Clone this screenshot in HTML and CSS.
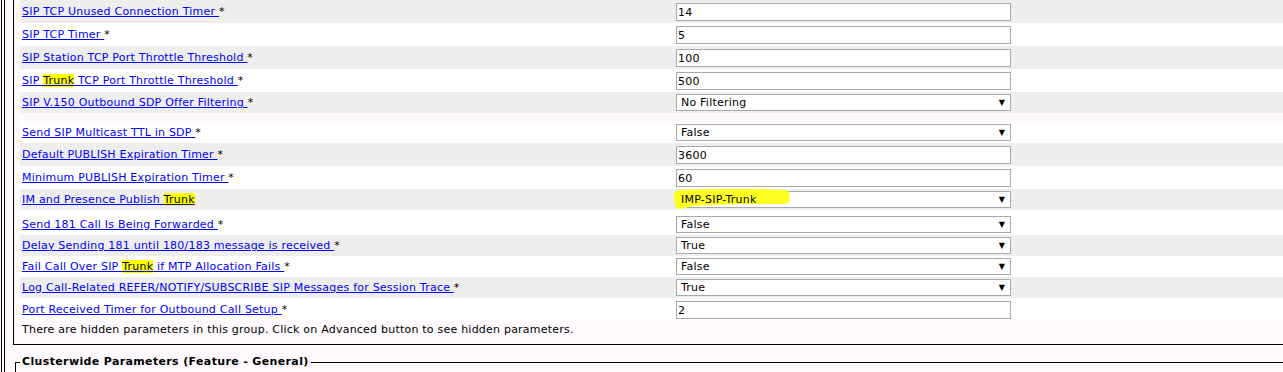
FILE: index.html
```html
<!DOCTYPE html>
<html lang="en">
<head>
  <meta charset="UTF-8" />
  <title>Service Parameter Configuration</title>
  <link rel="stylesheet" href="styles.css">
</head>
<body>

  <div class="frame">
    <div class="frame-inner">

      <div class="group">
        <table class="params">
          <tr class="shade">
            <td class="label"><a href="#">SIP TCP Unused Connection Timer </a> *</td>
            <td class="value"><input class="field" type="text" value="14"></td>
          </tr>
          <tr>
            <td class="label"><a href="#">SIP TCP Timer </a> *</td>
            <td class="value"><input class="field" type="text" value="5"></td>
          </tr>
          <tr class="shade">
            <td class="label"><a href="#">SIP Station TCP Port Throttle Threshold </a> *</td>
            <td class="value"><input class="field" type="text" value="100"></td>
          </tr>
          <tr>
            <td class="label"><a href="#">SIP <span class="hl">Trunk</span> TCP Port Throttle Threshold </a> *</td>
            <td class="value"><input class="field" type="text" value="500"></td>
          </tr>
          <tr class="shade pick">
            <td class="label"><a href="#">SIP V.150 Outbound SDP Offer Filtering </a> *</td>
            <td class="value"><div class="select"><span>No Filtering</span><span class="arrow">&#9660;</span></div></td>
          </tr>
          <tr class="spacer"><td colspan="2"></td></tr>
          <tr class="plain pick">
            <td class="label"><a href="#">Send SIP Multicast TTL in SDP </a> *</td>
            <td class="value"><div class="select"><span>False</span><span class="arrow">&#9660;</span></div></td>
          </tr>
          <tr class="shade">
            <td class="label"><a href="#">Default PUBLISH Expiration Timer </a> *</td>
            <td class="value"><input class="field" type="text" value="3600"></td>
          </tr>
          <tr>
            <td class="label"><a href="#">Minimum PUBLISH Expiration Timer </a> *</td>
            <td class="value"><input class="field" type="text" value="60"></td>
          </tr>
          <tr class="shade pick">
            <td class="label"><a href="#">IM and Presence Publish <span class="hl">Trunk</span></a></td>
            <td class="value">
              <div class="select marked">
                <svg class="marker" width="120" height="22" viewBox="0 0 120 22">
                  <path d="M1 4 L8 2 L40 1 L80 1 L113 2 L116 4 L117 13 L112 16 L70 16 L40 17 L20 18 L8 21 L3 20 L1 12 Z" />
                </svg>
                <span>IMP-SIP-Trunk</span><span class="arrow">&#9660;</span>
              </div>
            </td>
          </tr>
          <tr class="pick tall">
            <td class="label"><a href="#">Send 181 Call Is Being Forwarded </a> *</td>
            <td class="value"><div class="select"><span>False</span><span class="arrow">&#9660;</span></div></td>
          </tr>
          <tr class="shade pick">
            <td class="label"><a href="#">Delay Sending 181 until 180/183 message is received </a> *</td>
            <td class="value"><div class="select"><span>True</span><span class="arrow">&#9660;</span></div></td>
          </tr>
          <tr class="pick">
            <td class="label"><a href="#">Fail Call Over SIP <span class="hl">Trunk</span> if MTP Allocation Fails </a> *</td>
            <td class="value"><div class="select"><span>False</span><span class="arrow">&#9660;</span></div></td>
          </tr>
          <tr class="shade pick">
            <td class="label"><a href="#">Log Call-Related REFER/NOTIFY/SUBSCRIBE SIP Messages for Session Trace </a> *</td>
            <td class="value"><div class="select"><span>True</span><span class="arrow">&#9660;</span></div></td>
          </tr>
          <tr>
            <td class="label"><a href="#">Port Received Timer for Outbound Call Setup </a> *</td>
            <td class="value"><input class="field" type="text" value="2"></td>
          </tr>
        </table>
        <p class="note">There are hidden parameters in this group. Click on Advanced button to see hidden parameters.</p>
      </div>

      <fieldset class="group-next">
        <legend>Clusterwide Parameters (Feature - General)</legend>
      </fieldset>

    </div>
  </div>

</body>
</html>
```

FILE: styles.css
```css
html, body {
  margin: 0;
  height: 100%;
  overflow: hidden;
}

body {
  background-color: #fdf9fd;
  color: #000;
  font-family: "DejaVu Sans", Verdana, sans-serif;
  font-size: 11px;
  letter-spacing: 0.22px;
}

/* outer double rule on the left */
.frame {
  margin-left: 1px;
  padding-left: 2px;
  border-left: 1px solid #000;
  min-height: 100%;
}

.frame-inner {
  border-left: 1px solid #000;
  padding-left: 8px;
  min-height: 372px;
}

.group {
  width: 1300px;
  border-left: 1px solid #000;
  border-bottom: 1px solid #000;
  padding-left: 6px;
}

.params {
  border-collapse: collapse;
  width: 1294px;
}

.params td {
  padding: 3px 2px 2px;
  vertical-align: middle;
  line-height: 14px;
  white-space: nowrap;
}

.params tr {
  background-color: #fff;
}

.params tr.shade {
  background-color: #eeeeee;
}

.params tr.pick td {
  padding-top: 2px;
  padding-bottom: 2px;
}

.params tr.tall td {
  padding-top: 6px;
}

.params tr.spacer {
  background-color: transparent;
}

.params tr.spacer td {
  height: 9px;
  padding: 0;
}

.label {
  width: 650px;
}

.label a {
  color: #0000ff;
  text-decoration: underline;
}

.hl {
  background-color: #ffff00;
  color: #000;
}

.value {
  padding-left: 2px;
}

.field {
  display: block;
  box-sizing: border-box;
  width: 335px;
  height: 18px;
  margin: 0;
  padding: 0 1px;
  border: 1px solid #a9a9a9;
  background: #fff;
  font-family: "DejaVu Sans", Verdana, sans-serif;
  font-size: 11px;
  letter-spacing: 0.22px;
  color: #000;
}

.select {
  position: relative;
  box-sizing: border-box;
  width: 335px;
  height: 17px;
  padding-left: 4px;
  border: 1px solid #a9a9a9;
  background: #fff;
  display: flex;
  justify-content: space-between;
  align-items: center;
}

.select span {
  position: relative;
}

.select .arrow {
  font-size: 8px;
  margin-right: 5px;
}

.marker {
  position: absolute;
  left: -4px;
  top: -4px;
}

.marker path {
  fill: #ffff22;
}

.note {
  margin: 0;
  padding: 2px 2px 7px;
  line-height: 14px;
}

.group-next {
  width: 1300px;
  height: 60px;
  margin: 10px 0 0 2px;
  padding: 0 4px;
  border: 1px solid #000;
}

.group-next legend {
  padding: 0 2px;
  font-weight: bold;
  letter-spacing: 0.36px;
  line-height: 14px;
}
```
